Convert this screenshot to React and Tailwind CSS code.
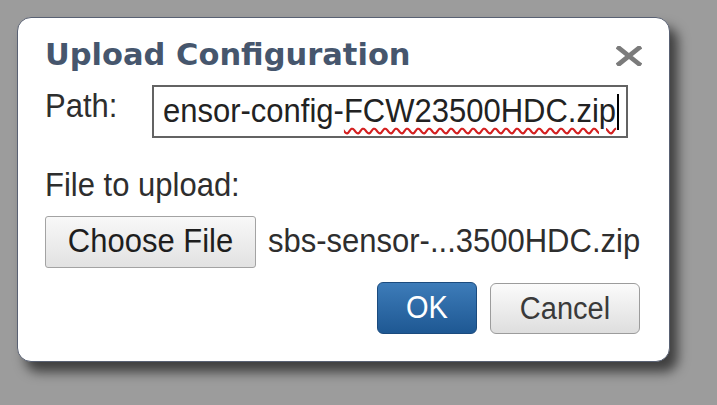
// Body copy is set a touch taller than the stock face to get the narrow look of the dialog font
const tall = "inline-block origin-[50%_80%] scale-y-[1.1]";

export default function App() {
  return (
    <div className="w-[717px] h-[405px] bg-[#9c9c9c] pt-[17px] pl-[17px] overflow-hidden [font-family:'Liberation_Sans',Arial,sans-serif]">
      <div className="w-[653px] h-[345px] bg-white rounded-[14px] border border-[#596173] shadow-[8px_10px_12px_rgba(0,0,0,0.6)] pl-[27px] pr-[27px] pt-[20px] flex flex-col">
        {/* header */}
        <div className="flex items-start justify-between h-[34px]">
          <h1 className="text-[30.5px] leading-[34px] font-bold text-[#46566d] [font-family:'DejaVu_Sans',sans-serif] whitespace-nowrap">
            Upload Configuration
          </h1>
          <svg width="26" height="20" viewBox="0 0 26 20" className="mt-[8px]">
            <path d="M3 2 L23 18 M23 2 L3 18" stroke="#7b7b7b" strokeWidth="4.8" strokeLinecap="square" />
          </svg>
        </div>

        {/* path field */}
        <div className="flex items-start mt-[13px]">
          <span className="w-[107px] mt-[4px] text-[31px] leading-[36px] text-[#2e2e2e]">
            <span className={tall}>Path:</span>
          </span>
          <div className="w-[476px] h-[53px] border-2 border-[#636363] flex items-center pl-[9px] overflow-hidden whitespace-nowrap">
            <span className="text-[31px] leading-[36px] text-[#222]">
              <span className={tall}>
                ensor-config-
                <span className="underline decoration-wavy decoration-[#d42020] decoration-[1.5px] underline-offset-[5px]">
                  FCW23500HDC.zip
                </span>
              </span>
            </span>
            <span className="inline-block w-[2px] h-[36px] bg-black ml-[1px]" />
          </div>
        </div>

        {/* file chooser */}
        <div className="mt-[30px] text-[31px] leading-[36px] text-[#2e2e2e]">
          <span className={tall}>File to upload:</span>
        </div>
        <div className="flex items-center mt-[12px]">
          <button className="w-[211px] h-[52px] border border-[#a3a3a3] rounded-[3px] bg-gradient-to-b from-[#f8f8f8] to-[#e2e2e2] text-[31px] leading-[36px] text-[#1e1e1e]">
            <span className={tall}>Choose File</span>
          </button>
          <span className="ml-[12px] text-[31px] leading-[36px] text-[#2e2e2e] whitespace-nowrap">
            <span className={tall}>sbs-sensor-...3500HDC.zip</span>
          </span>
        </div>

        {/* actions */}
        <div className="flex justify-end items-start mt-[14px] mr-[2px] gap-[13px]">
          <button className="w-[100px] h-[52px] rounded-[6px] border border-[#1b4b7e] bg-gradient-to-b from-[#3d7cb9] to-[#1e5893] text-white text-[29px] leading-[34px]">
            <span className={tall}>OK</span>
          </button>
          <button className="w-[150px] h-[51px] mt-[1px] rounded-[6px] border border-[#9c9c9c] bg-gradient-to-b from-[#fbfbfb] to-[#dedede] text-[#3a3a3a] text-[29px] leading-[34px]">
            <span className={tall}>Cancel</span>
          </button>
        </div>
      </div>
    </div>
  );
}
